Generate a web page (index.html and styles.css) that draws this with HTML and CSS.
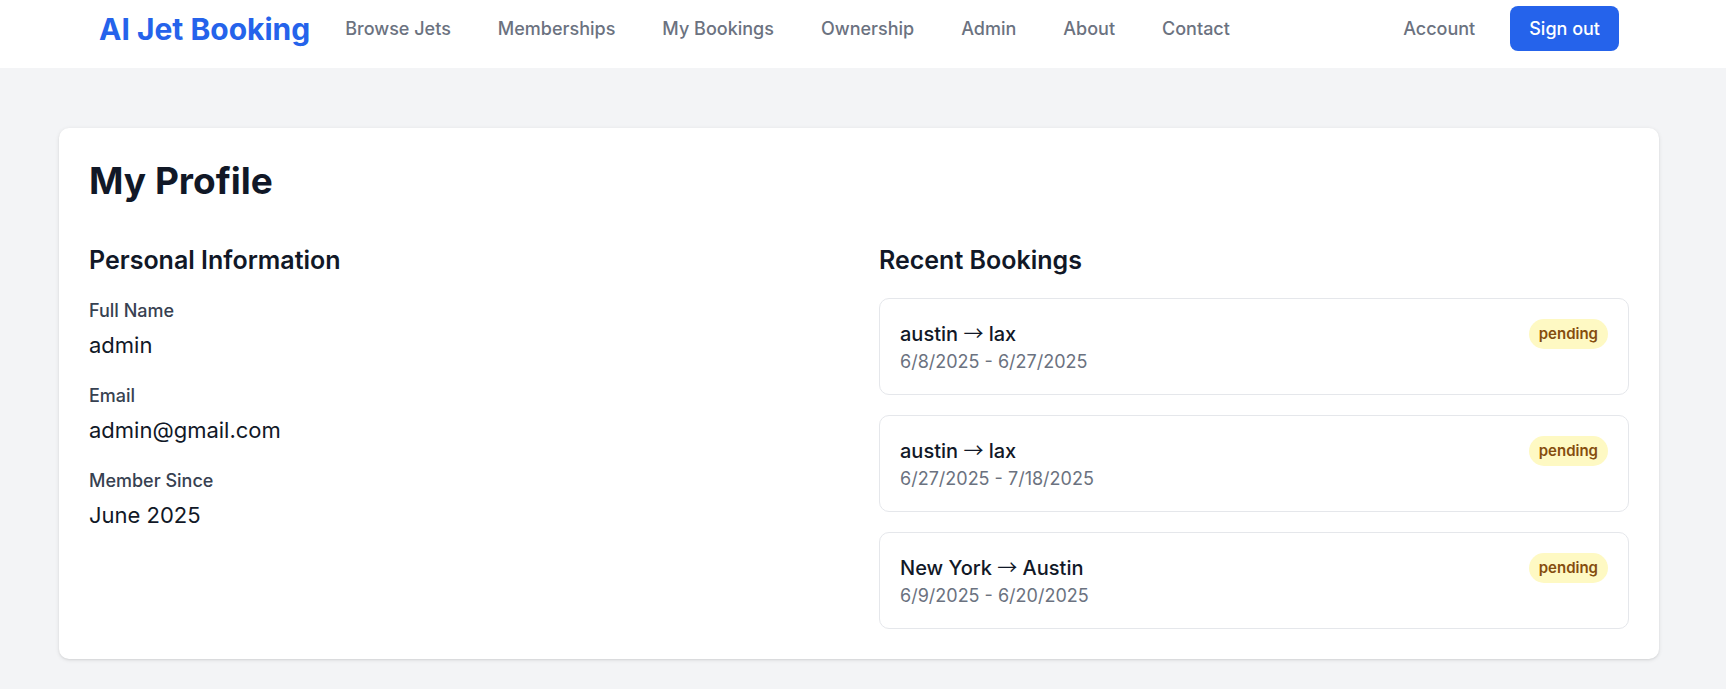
FILE: index.html
```html
<!DOCTYPE html>
<html lang="en">
<head>
  <meta charset="utf-8">
  <meta name="viewport" content="width=device-width, initial-scale=1">
  <title>My Profile - AI Jet Booking</title>
  <link rel="stylesheet" href="styles.css">
</head>
<body>
  <header class="site-header">
    <div class="header-inner">
      <a class="logo" href="#">AI Jet Booking</a>
      <nav class="main-nav" aria-label="Main">
        <a class="nav-link" href="#">Browse Jets</a>
        <a class="nav-link" href="#">Memberships</a>
        <a class="nav-link" href="#">My Bookings</a>
        <a class="nav-link" href="#">Ownership</a>
        <a class="nav-link" href="#">Admin</a>
        <a class="nav-link" href="#">About</a>
        <a class="nav-link" href="#">Contact</a>
      </nav>
      <div class="header-actions">
        <a class="nav-link" href="#">Account</a>
        <button class="sign-out" type="button">Sign out</button>
      </div>
    </div>
  </header>
  <main class="page">
    <div class="profile-card">
      <h1 class="title">My Profile</h1>
      <div class="columns">
        <section>
          <h2 class="section-title">Personal Information</h2>
          <dl class="fields">
            <div><dt class="label">Full Name</dt><dd class="value">admin</dd></div>
            <div><dt class="label">Email</dt><dd class="value">admin@gmail.com</dd></div>
            <div><dt class="label">Member Since</dt><dd class="value">June 2025</dd></div>
          </dl>
        </section>
        <section>
          <h2 class="section-title">Recent Bookings</h2>
          <ul class="bookings">
            <li class="booking">
              <div><p class="route">austin <span class="arrow">→</span> lax</p><p class="dates">6/8/2025 - 6/27/2025</p></div>
              <span class="badge">pending</span>
            </li>
            <li class="booking">
              <div><p class="route">austin <span class="arrow">→</span> lax</p><p class="dates">6/27/2025 - 7/18/2025</p></div>
              <span class="badge">pending</span>
            </li>
            <li class="booking">
              <div><p class="route">New York <span class="arrow">→</span> Austin</p><p class="dates">6/9/2025 - 6/20/2025</p></div>
              <span class="badge">pending</span>
            </li>
          </ul>
        </section>
      </div>
    </div>
  </main>
</body>
</html>
```
FILE: styles.css
```css
* {
  box-sizing: border-box;
  margin: 0;
  padding: 0;
}

body {
  background: #f3f4f6;
  color: #111827;
  font-family: Inter, "Liberation Sans", sans-serif;
  font-size: 20px;
  line-height: 30px;
}

a {
  color: inherit;
  text-decoration: none;
}

.site-header {
  padding: 6px 8px 17px 0;
  background: #fff;
}

.header-inner {
  display: flex;
  align-items: center;
  max-width: 1600px;
  margin: 0 auto;
  padding: 0 40px;
}

.logo {
  color: #2563eb;
  font-size: 30px;
  font-weight: 700;
  line-height: 40px;
  white-space: nowrap;
}

.main-nav {
  display: flex;
  gap: 47px;
  margin-left: 35px;
}

.nav-link {
  color: #6b7280;
  font-size: 18px;
  font-weight: 500;
  line-height: 25px;
  white-space: nowrap;
}

.header-actions {
  display: flex;
  align-items: center;
  gap: 35px;
  margin-left: auto;
}

.sign-out {
  padding: 10px 19px;
  border: 0;
  border-radius: 8px;
  background: #2563eb;
  color: #fff;
  font: 500 18px/25px Inter, "Liberation Sans", sans-serif;
  white-space: nowrap;
  cursor: pointer;
}

.page {
  padding: 60px 8px 30px 0;
}

.profile-card {
  max-width: 1600px;
  margin: 0 auto;
  padding: 30px;
  border-radius: 10px;
  background: #fff;
  box-shadow: 0 1px 4px rgba(0, 0, 0, 0.1), 0 1px 2px rgba(0, 0, 0, 0.06);
}

.title {
  margin-bottom: 40px;
  font-size: 37px;
  font-weight: 700;
  line-height: 45px;
}

.columns {
  display: grid;
  grid-template-columns: 1fr 1fr;
  gap: 40px;
}

.section-title {
  margin-bottom: 20px;
  font-size: 25px;
  font-weight: 600;
  line-height: 35px;
}

.fields,
.bookings {
  display: grid;
  gap: 20px;
  list-style: none;
}

.label {
  margin-bottom: 5px;
  color: #374151;
  font-size: 18px;
  font-weight: 500;
  line-height: 25px;
}

.value {
  font-size: 22px;
  line-height: 35px;
}

.booking {
  display: flex;
  justify-content: space-between;
  align-items: flex-start;
  padding: 20px;
  border: 1px solid #e5e7eb;
  border-radius: 10px;
}

.route {
  font-weight: 500;
}

.arrow {
  font-family: "Noto Sans CJK JP", sans-serif;
  font-weight: 400;
  line-height: 20px;
}

.dates {
  color: #6b7280;
  font-size: 18px;
  line-height: 25px;
}

.badge {
  padding: 5px 10px;
  border-radius: 15px;
  background: #fef9c3;
  color: #854d0e;
  font-size: 15px;
  font-weight: 600;
  line-height: 20px;
}
```
